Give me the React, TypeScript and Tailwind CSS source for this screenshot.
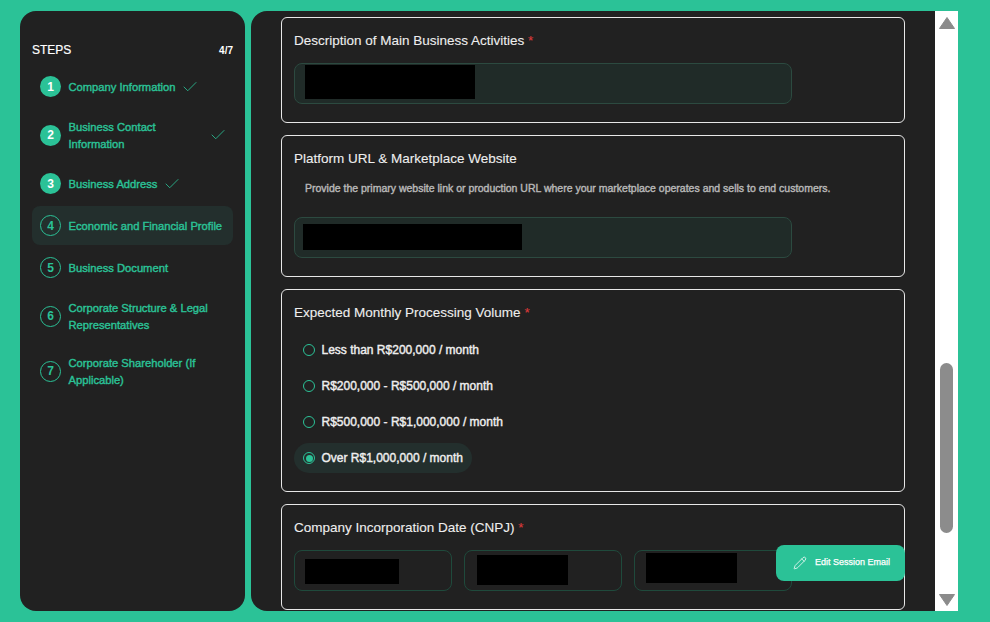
import { Check, Pencil } from "lucide-react";

const steps = [
  { n: 1, label: "Company Information", done: true, wide: false },
  { n: 2, label: "Business Contact Information", done: true, wide: true },
  { n: 3, label: "Business Address", done: true, wide: false },
  { n: 4, label: "Economic and Financial Profile", done: false, active: true, wide: false },
  { n: 5, label: "Business Document", done: false, wide: false },
  { n: 6, label: "Corporate Structure & Legal Representatives", done: false, wide: true },
  { n: 7, label: "Corporate Shareholder (If Applicable)", done: false, wide: true },
];

const options = [
  "Less than R$200,000 / month",
  "R$200,000 - R$500,000 / month",
  "R$500,000 - R$1,000,000 / month",
  "Over R$1,000,000 / month",
];

function Step({ s }: { s: (typeof steps)[number] }) {
  return (
    <div className={`flex items-center rounded-lg pl-2 pr-[6px] py-[9px] ${s.active ? "bg-[#232f2d]" : ""}`}>
      <div
        className={`w-[21px] h-[21px] shrink-0 rounded-full flex items-center justify-center text-[12px] font-bold ${
          s.done ? "bg-[#2bc297] text-white" : "border border-[#2bc297] text-[#2bc297]"
        }`}
      >
        {s.n}
      </div>
      <div
        className={`ml-[7.5px] pt-[1px] -mb-[1px] text-[11.2px] leading-[17px] text-[#2bc297] [-webkit-text-stroke:0.4px] ${s.wide ? "flex-1 pr-[12px]" : ""}`}
      >
        {s.label}
      </div>
      {s.done && <Check className="ml-[6px] w-[18px] h-[18px] text-[#2bc297]" strokeWidth={1.1} />}
    </div>
  );
}

function Label({ text, req }: { text: string; req?: boolean }) {
  return (
    <div className="text-[13.5px] leading-[20px] text-[#eeeeee] [-webkit-text-stroke:0.1px]">
      {text}
      {req && <span className="text-[#d93a3a]"> *</span>}
    </div>
  );
}

export default function App() {
  return (
    <div className="w-[990px] h-[622px] bg-[#2bc297] flex pt-[11px] pl-5 overflow-hidden font-['Liberation_Sans',sans-serif]">
      <aside className="w-[225px] h-[600px] rounded-2xl bg-[#212121] px-3 pt-[32px]">
        <div className="flex items-center justify-between h-[14px]">
          <span className="text-[12px] text-white [-webkit-text-stroke:0.2px]">STEPS</span>
          <span className="text-[10px] font-bold text-white">4/7</span>
        </div>
        <div className="mt-[10px] flex flex-col gap-[3px]">
          {steps.map((s) => (
            <Step key={s.n} s={s} />
          ))}
        </div>
      </aside>

      <main className="relative ml-[6px] w-[707px] h-[600px] flex rounded-l-2xl bg-[#212121] overflow-hidden">
        <div className="w-[684px] pl-[30px] pr-[30px] pt-[6px] flex flex-col gap-3">
          <section className="border border-[#e8e8e8] rounded-md h-[106px] shrink-0 px-[12px] pt-[13px]">
            <Label text="Description of Main Business Activities" req />
            <div className="mt-[12px] w-[498px] h-[41px] rounded-lg border border-[#2c4a40] bg-[#202b28] pl-[10px] pt-[1px]">
              <div className="w-[170px] h-[34px] bg-black" />
            </div>
          </section>

          <section className="border border-[#e8e8e8] rounded-md h-[142px] shrink-0 px-[12px] pt-[13px]">
            <Label text="Platform URL & Marketplace Website" />
            <p className="mt-[12px] pl-[11px] text-[10.5px] leading-[14px] text-[#b8b8b8] [-webkit-text-stroke:0.4px]">
              Provide the primary website link or production URL where your marketplace operates and sells to end customers.
            </p>
            <div className="mt-[22px] w-[498px] h-[41px] rounded-lg border border-[#2c4a40] bg-[#202b28] pl-[8px] pt-[6px]">
              <div className="w-[219px] h-[26px] bg-black" />
            </div>
          </section>

          <section className="border border-[#e8e8e8] rounded-md h-[203px] shrink-0 px-[12px] pt-[13px]">
            <Label text="Expected Monthly Processing Volume" req />
            <div className="mt-[12px] flex flex-col gap-[6px] items-start">
              {options.map((o, i) => (
                <div
                  key={o}
                  className={`h-[30px] flex items-center pl-[9px] pr-[9px] rounded-full ${i === 3 ? "bg-[#232f2d]" : ""}`}
                >
                  <span className="w-[12px] h-[12px] rounded-full border border-[#2bc297] flex items-center justify-center">
                    {i === 3 && <span className="w-[7px] h-[7px] rounded-full bg-[#2bc297]" />}
                  </span>
                  <span className="ml-[6.5px] text-[12px] text-[#efefef] [-webkit-text-stroke:0.4px]">{o}</span>
                </div>
              ))}
            </div>
          </section>

          <section className="border border-[#e8e8e8] rounded-md h-[106px] shrink-0 px-[12px] pt-[13px]">
            <Label text="Company Incorporation Date (CNPJ)" req />
            <div className="mt-[12px] flex gap-3">
              <div className="w-[158px] h-[41px] rounded-lg border border-[#1f4a3c] pl-[10px] pt-[8px]">
                <div className="w-[94px] h-[25px] bg-black" />
              </div>
              <div className="w-[158px] h-[41px] rounded-lg border border-[#1f4a3c] pl-[12px] pt-[4px]">
                <div className="w-[91px] h-[30px] bg-black" />
              </div>
              <div className="w-[158px] h-[41px] rounded-lg border border-[#1f4a3c] pl-[11px] pt-[2px]">
                <div className="w-[91px] h-[30px] bg-black" />
              </div>
            </div>
          </section>
        </div>

        <div className="w-[23px] h-full bg-white flex flex-col items-center">
          <svg viewBox="0 0 16 12" className="w-[16px] h-[12px] mt-[6px] shrink-0" fill="#8b8b8b">
            <path d="M8 0.5 L15.5 11.5 H0.5 Z" strokeLinejoin="round" stroke="#8b8b8b" />
          </svg>
          <div className="mt-[334px] w-[13px] h-[170px] rounded-full bg-[#8c8c8c] shrink-0" />
          <svg viewBox="0 0 16 12" className="w-[16px] h-[12px] mt-[61px] shrink-0" fill="#8b8b8b">
            <path d="M8 11.5 L15.5 0.5 H0.5 Z" strokeLinejoin="round" stroke="#8b8b8b" />
          </svg>
        </div>

        <button className="absolute left-[525px] top-[534px] w-[129px] h-[36px] rounded-lg bg-[#2bc297] flex items-center pl-[17px] text-white">
          <Pencil className="w-[14px] h-[14px]" strokeWidth={1.3} />
          <span className="ml-[8px] text-[9px] [-webkit-text-stroke:0.25px]">Edit Session Email</span>
        </button>
      </main>
    </div>
  );
}
